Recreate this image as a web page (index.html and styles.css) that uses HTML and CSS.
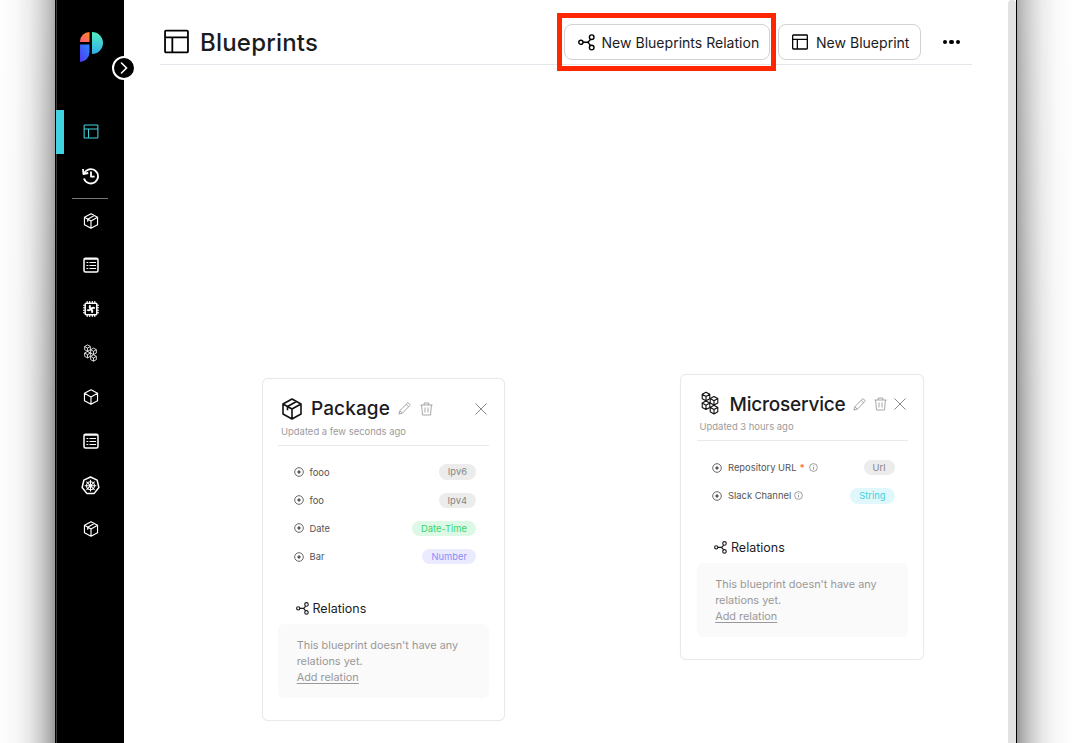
FILE: index.html
```html
<!DOCTYPE html>
<html lang="en">
<head>
<meta charset="utf-8">
<title>Blueprints</title>
<link rel="stylesheet" href="styles.css">
</head>
<body>
<svg class="defs" aria-hidden="true">
  <defs>
    <linearGradient id="g-orange" x1="0" y1="1" x2="1" y2="0"><stop offset="0" stop-color="#ff5a78"/><stop offset="1" stop-color="#ff8a1e"/></linearGradient>
    <linearGradient id="g-teal" x1="0" y1="0" x2="0" y2="1"><stop offset="0" stop-color="#52efc0"/><stop offset="1" stop-color="#30aee8"/></linearGradient>
    <linearGradient id="g-blue" x1="1" y1="0" x2="0" y2="1"><stop offset="0" stop-color="#2d87ff"/><stop offset="1" stop-color="#5038f2"/></linearGradient>
    <symbol id="layout" viewBox="0 0 24 24"><rect x="1" y="1.5" width="22" height="21" rx="1"/><path d="M1 8h22M8 8v14"/></symbol>
    <symbol id="box" viewBox="0 0 20 22"><path d="M10 1l9 5v10l-9 5-9-5V6zM1 6l9 5 9-5M10 11v10M5.500 12.200V8.500l9-5"/></symbol>
    <symbol id="cube" viewBox="0 0 20 22"><path d="M10 1l9 5v10l-9 5-9-5V6zM1 6l9 5 9-5M10 11v10"/></symbol>
    <symbol id="cubes" viewBox="0 0 18 24">
      <path d="M5 1.200l3.800 2.100v4.400L5 9.800 1.200 7.700V3.300zM1.200 3.300L5 5.500l3.800-2.200M5 5.500v4.300"/>
      <path d="M13 5.500l3.800 2.100V12L13 14.100 9.200 12V7.600zM9.200 7.600L13 9.800l3.800-2.200M13 9.800v4.300M5 9.900L8.800 12v4.400L5 18.500l-3.800-2.100V12zM1.200 12L5 14.200 8.800 12M5 14.200v4.300M13 14.300l3.800 2.100v4.400L13 22.900l-3.800-2.100v-4.400zM9.200 16.400l3.800 2.200 3.800-2.200M13 18.600v4.300"/>
    </symbol>
    <symbol id="list" viewBox="0 0 16 16"><rect x="1" y="1.200" width="14" height="13.800" rx="1.500" stroke-width="1.500"/><path d="M1.500 2.200h13M3.500 5.500h1.800M6.500 5.500h6.500M3.500 8.500h1.800M6.500 8.500h6.500M3.500 11.500h1.800M6.500 11.500h6.500"/></symbol>
    <symbol id="chip" viewBox="0 0 16 16"><rect x="2.200" y="2.200" width="11.600" height="11.600" rx="1" stroke-width="1.500"/><path d="M4.200 0v2M6.700 0v2M9.300 0v2M11.800 0v2M4.200 14v2M6.700 14v2M9.300 14v2M11.800 14v2M0 4.200h2M0 6.700h2M0 9.300h2M0 11.800h2M14 4.200h2M14 6.700h2M14 9.300h2M14 11.800h2"/><path d="M8 8Q5.800 6.400 7.300 4.200M8 8Q9.600 5.800 11.800 7.300M8 8Q10.200 9.600 8.700 11.800M8 8Q6.400 10.200 4.200 8.700" stroke-width="1.800"/></symbol>
    <symbol id="history" viewBox="0 0 18 18"><path d="M2.200 6.500A7.200 7.200 0 1 1 2 11.500M9 4.600V9.600h3.600"/><path d="M1 2l.4 5 4.800-1"/></symbol>
    <symbol id="helm" viewBox="0 0 20 20"><path d="M10 1l7 3.400 1.800 7.700-4.900 6.200H6.100l-4.900-6.200L3 4.400z" stroke-width="1.600"/><circle cx="10" cy="10.200" r="4.200"/><path d="M10 4v12.400M3.900 10.200h12.200M5.700 5.900l8.600 8.600M14.300 5.900l-8.600 8.600"/></symbol>
    <symbol id="relation" viewBox="0 0 17 17"><circle cx="2.900" cy="8.300" r="2.100"/><circle cx="13.700" cy="3.200" r="2.300"/><circle cx="13.700" cy="13.600" r="2.300"/><path d="M5 8.300h4.200M12.600 5.300C11.500 6.800 10.700 8.300 9.200 8.300c1.600 0 2.200 1.600 3.200 3.300" /></symbol>
    <symbol id="pencil" viewBox="0 0 14 14"><path d="M1 13l1-3.700L10 1.300q.8-.7 1.600 0l1 1q.8.800 0 1.600L4.700 12zM8.800 2.500l2.700 2.700M2.200 9.500l2.400 2.400"/></symbol>
    <symbol id="trash" viewBox="0 0 13 14"><path d="M.5 3h12M4.200 3V1h4.600v2M1.600 3l.9 10h8l.9-10M5 5.500v5M8 5.500v5"/></symbol>
    <symbol id="close" viewBox="0 0 12 12"><path d="M.5.5l11 11M11.500.5l-11 11"/></symbol>
    <symbol id="target" viewBox="0 0 10 10"><circle cx="5" cy="5" r="4.300"/><circle cx="5" cy="5" r="1.200" fill="currentColor"/></symbol>
    <symbol id="info" viewBox="0 0 9 9"><circle cx="4.500" cy="4.500" r="3.900"/><path d="M4.500 4v2.600M4.500 2.300v.9"/></symbol>
  </defs>
</svg>
<div class="desktop">
  <div class="shade shade-left"></div>
  <div class="window">
    <aside class="sidebar">
      <svg class="logo" viewBox="0 0 24 30"><path d="M9.500 0v10H0V9.500A9.500 9.500 0 0 1 9.500 0z" fill="url(#g-orange)"/><path d="M12 0a11 11 0 0 1 0 22z" fill="url(#g-teal)"/><path d="M0 12.500h9.500v7.500A10 10 0 0 1 0 30z" fill="url(#g-blue)"/></svg>
      <button class="expand" aria-label="Expand"><svg viewBox="0 0 8 12"><path d="M1.500 1l5 5-5 5"/></svg></button>
      <nav class="nav">
        <a class="item active"><svg class="ico i15"><use href="#layout"/></svg></a>
        <a class="item"><svg class="ico i18"><use href="#history"/></svg></a>
        <span class="sep"></span>
        <a class="item"><svg class="ico i16"><use href="#box"/></svg></a>
        <a class="item"><svg class="ico i16 thin"><use href="#list"/></svg></a>
        <a class="item"><svg class="ico i16 thin"><use href="#chip"/></svg></a>
        <a class="item"><svg class="ico i17 thin"><use href="#cubes"/></svg></a>
        <a class="item"><svg class="ico i16"><use href="#cube"/></svg></a>
        <a class="item"><svg class="ico i16 thin"><use href="#list"/></svg></a>
        <a class="item"><svg class="ico i19 thin"><use href="#helm"/></svg></a>
        <a class="item"><svg class="ico i16"><use href="#box"/></svg></a>
      </nav>
    </aside>
    <main class="main">
      <header class="header">
        <svg class="ico title-icon"><use href="#layout"/></svg>
        <h1>Blueprints</h1>
        <div class="actions">
          <button class="btn btn-relation"><svg class="ico"><use href="#relation"/></svg><span>New Blueprints Relation</span><i class="highlight"></i></button>
          <button class="btn btn-blueprint"><svg class="ico"><use href="#layout"/></svg><span>New Blueprint</span></button>
          <span class="dots"><i></i><i></i><i></i></span>
        </div>
      </header>
      <section class="card package">
        <div class="card-head">
          <svg class="ico card-icon"><use href="#box"/></svg><h2>Package</h2>
          <svg class="ico pencil"><use href="#pencil"/></svg><svg class="ico trash"><use href="#trash"/></svg><svg class="ico close"><use href="#close"/></svg>
        </div>
        <p class="updated">Updated a few seconds ago</p>
        <ul class="props">
          <li><svg class="ico target"><use href="#target"/></svg><span>fooo</span><b class="tag">Ipv6</b></li>
          <li><svg class="ico target"><use href="#target"/></svg><span>foo</span><b class="tag">Ipv4</b></li>
          <li><svg class="ico target"><use href="#target"/></svg><span>Date</span><b class="tag green">Date-Time</b></li>
          <li><svg class="ico target"><use href="#target"/></svg><span>Bar</span><b class="tag violet">Number</b></li>
        </ul>
        <h3><svg class="ico"><use href="#relation"/></svg><span>Relations</span></h3>
        <div class="empty"><p>This blueprint doesn't have any<br>relations yet.</p><a>Add relation</a></div>
      </section>
      <section class="card micro">
        <div class="card-head">
          <svg class="ico card-icon cubes"><use href="#cubes"/></svg><h2>Microservice</h2>
          <svg class="ico pencil"><use href="#pencil"/></svg><svg class="ico trash"><use href="#trash"/></svg><svg class="ico close"><use href="#close"/></svg>
        </div>
        <p class="updated">Updated 3 hours ago</p>
        <ul class="props">
          <li><svg class="ico target"><use href="#target"/></svg><span>Repository URL</span><em>*</em><svg class="ico info"><use href="#info"/></svg><b class="tag">Url</b></li>
          <li><svg class="ico target"><use href="#target"/></svg><span>Slack Channel</span><svg class="ico info"><use href="#info"/></svg><b class="tag cyan">String</b></li>
        </ul>
        <h3><svg class="ico"><use href="#relation"/></svg><span>Relations</span></h3>
        <div class="empty"><p>This blueprint doesn't have any<br>relations yet.</p><a>Add relation</a></div>
      </section>
    </main>
    <div class="scrollbar"></div>
  </div>
  <div class="shade shade-right"></div>
</div>
</body>
</html>
```
FILE: styles.css
```css
* { box-sizing: border-box; margin: 0; padding: 0; }
body { width: 1072px; height: 743px; overflow: hidden; background: #fff; font-family: Inter, "Liberation Sans", sans-serif; color: #1b1c1f; }
.defs { position: absolute; width: 0; height: 0; }
.desktop { display: grid; grid-template-columns: 55px 962px 55px; height: 743px; }
.shade-left { background: linear-gradient(to left, #989898 0, #b2b2b2 6px, #cfcfcf 15px, #e7e7e7 25px, #f7f7f7 38px, #fefefe 55px); }
.shade-right { background: linear-gradient(to right, #989898 0, #b2b2b2 6px, #cfcfcf 15px, #e7e7e7 25px, #f7f7f7 38px, #fefefe 55px); }
.shade { -webkit-mask-image: linear-gradient(rgba(0,0,0,.8), #000 400px); mask-image: linear-gradient(rgba(0,0,0,.8), #000 400px); }
.window { display: flex; border-left: 1px solid #000; border-right: 1px solid #000; background: #fff; }
.scrollbar { width: 8px; background: #e2e2e2; border-radius: 4px 4px 0 0; }
.ico { fill: none; stroke: currentColor; stroke-width: 1.5; flex: none; display: block; stroke-linejoin: round; }

.sidebar { position: relative; width: 68px; background: #000; border-left: 1px solid #3a3a3a; color: #fff; padding-top: 32px; }
.logo { display: block; width: 24px; height: 30px; margin-left: 23px; }
.expand { position: absolute; left: 55px; top: 56px; width: 24px; height: 24px; border: 2px solid #fff; border-radius: 50%; background: #000; display: grid; place-items: center; z-index: 2; }
.expand svg { width: 8px; height: 12px; fill: none; stroke: #fff; stroke-width: 1.6; stroke-linecap: round; }
.nav { margin: 48px 0 0 -1px; display: flex; flex-direction: column; align-items: stretch; }
.item { height: 44px; display: flex; align-items: center; justify-content: center; padding-left: 1px; }
.sep { height: 1px; background: #777; margin: 0 16px; }
.active { color: #41d3e0; border-left: 8px solid #41d3e0; padding: 0 7px 1px 0; }
.i15 { width: 16px; height: 15px; stroke-width: 1.7; }
.i16 { width: 16px; height: 16px; stroke-width: 1.6; }
.i17 { width: 17px; height: 18px; }
.i18 { width: 18px; height: 18px; stroke-width: 1.8; }
.i19 { width: 19px; height: 19px; }
.thin { stroke-width: 1.1; }

.main { position: relative; width: 884px; padding: 20px 36px 0; }
.header { height: 45px; border-bottom: 1px solid #e6e6ec; display: flex; align-items: center; padding-left: 4px; }
.title-icon { width: 25px; height: 25px; color: #000; stroke-width: 1.7; margin-top: -1px; }
h1 { font-size: 24px; font-weight: 500; line-height: 30px; letter-spacing: .2px; margin: 1px 0 0 11px; }
.actions { margin-left: auto; display: flex; align-items: center; gap: 8px; padding-right: 12px; }
.btn { position: relative; height: 36px; border: 1px solid #d2d2d2; border-radius: 8px; background: #fff; color: #1b1c1f; font: 400 14.050px Inter, "Liberation Sans", sans-serif; display: flex; align-items: center; padding: 0 0 0 13px; gap: 7px; white-space: nowrap; }
.btn svg { width: 17px; height: 17px; color: #000; stroke-width: 1.4; }
.btn-relation { width: 206px; }
.btn-blueprint { width: 143px; gap: 8.500px; }
.btn-blueprint svg { width: 16px; height: 16px; stroke-width: 1.9; }
.highlight { position: absolute; left: -8px; top: -12px; width: 219px; height: 58px; border: 5px solid #ff2600; }
.dots { display: flex; gap: 2px; margin-left: 14px; }
.dots i { width: 4.500px; height: 4.500px; border-radius: 50%; background: #000; }

.card { position: absolute; width: 243.500px; border: 1px solid #e9e9ea; border-radius: 6px; background: #fff; padding: 0 15px 0 15.500px; box-shadow: 0 0 1px rgba(0,0,0,.08); }
.package { left: 137.500px; top: 378px; height: 343px; }
.micro { left: 556px; top: 374px; height: 286px; }
.card-head { display: flex; align-items: center; height: 28px; margin-top: 15px; padding-left: 3px; color: #9d9d9d; }
.package .card-head { margin-top: 15.500px; padding-left: 3.500px; }
.card-icon { width: 20px; height: 22px; color: #111; stroke-width: 1.6; }
.cubes { width: 18px; height: 24px; stroke-width: 1.1; margin: -2px 2px 0 1px; }
h2 { font-size: 19px; line-height: 26px; font-weight: 500; color: #1b1c1f; margin: 1px 0 0 9.500px; width: 79px; letter-spacing: .1px; white-space: nowrap; }
.micro h2 { width: 115px; margin-left: 9px; letter-spacing: -.2px; }
.pencil { width: 13px; height: 13px; margin-left: 8px; stroke-width: 1; }
.trash { width: 13px; height: 14px; margin-left: 8.500px; stroke-width: .9; }
.close { width: 12px; height: 12px; margin-left: auto; margin-right: 2px; color: #888; stroke-width: 1; }
.updated { height: 23px; padding: 3.500px 0 0 3px; border-bottom: 1px solid #e9e9e9; font-size: 9.450px; line-height: 12px; color: #9b9b9b; white-space: nowrap; }
.micro .updated { padding-top: 3px; }
.props { list-style: none; padding: 12.500px 13px 0 15.500px; }
.props li { display: flex; align-items: center; height: 28.200px; font-size: 9.400px; color: #555; white-space: nowrap; }
.target { width: 10px; height: 10px; margin-right: 6px; stroke-width: .9; }
.info { width: 9px; height: 9px; margin-left: 3px; color: #888; stroke-width: .8; }
em { color: #ff7a2e; font-style: normal; font-weight: 700; margin-left: 3px; }
em + .info { margin-left: 4px; }
.tag { margin-left: auto; height: 15.500px; line-height: 15.500px; border-radius: 8px; padding: 0 9px; background: #ececec; color: #858585; font-weight: 400; }
.green { background: #def8e6; color: #38d565; }
.violet { background: #ebebff; color: #8d8df8; }
.cyan { background: #e0f8fb; color: #41d3e0; }
h3 { display: flex; align-items: center; gap: 4px; height: 18px; margin: 28.500px 0 0 17.500px; font-size: 12.500px; font-weight: 400; color: #1b1c1f; }
h3 svg { width: 13px; height: 13px; stroke-width: 1.5; }
.empty { height: 74px; margin-top: 7px; border-radius: 6px; background: #fafafa; padding: 12.700px 0 0 18.700px; font-size: 10.900px; line-height: 16.200px; color: #999; white-space: nowrap; }
.micro .empty { margin-top: 6.500px; line-height: 16.400px; }
.empty a { text-decoration: underline; text-underline-offset: 2px; display: block; }
```
